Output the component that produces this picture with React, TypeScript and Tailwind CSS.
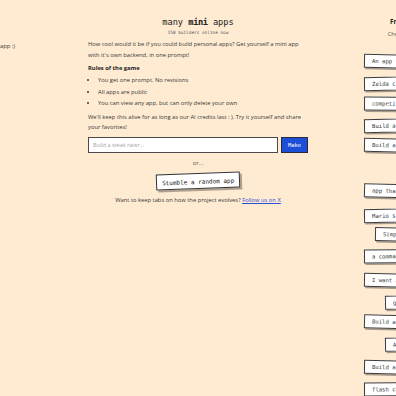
import React from 'react';

const mono = "font-['DejaVu_Sans_Mono',monospace]";
const sans = "font-['Open_Sans',sans-serif]";

// prompts shown in the right-hand feed; gap is the space above each card
const feed = [
  { text: 'An app that tracks my daily habits and keeps streaks going', gap: 'mt-0', tilt: 'rotate-[1deg]' },
  { text: 'Zelda clone with a tiny overworld and a dungeon to explore', gap: 'mt-[7px]', tilt: '-rotate-[1deg]' },
  { text: 'competitive typing race where friends can join by link', gap: 'mt-[7px]', tilt: 'rotate-[0.5deg]' },
  { text: 'Build a recipe box where my family can add their favorites', gap: 'mt-[7px]', tilt: '-rotate-[1deg]' },
  { text: 'Build a pixel art editor with layers and an export button', gap: 'mt-[7px]', tilt: 'rotate-[1deg]' },
  { text: 'Todo list', gap: 'mt-[9px]', tilt: '-rotate-[1.5deg]' },
  { text: 'app that rates my outfits from a short description of them', gap: 'mt-[9px]', tilt: 'rotate-[1.5deg]' },
  { text: 'Mario style platformer with three levels and a boss fight', gap: 'mt-[9px]', tilt: '-rotate-[1deg]' },
  { text: 'Simple chess game with a bot', gap: 'mt-[6px]', tilt: 'rotate-[1deg]' },
  { text: 'a command line interface for taking quick notes each day', gap: 'mt-[7px]', tilt: '-rotate-[0.5deg]' },
  { text: 'I want a shared board for my team to vote on lunch spots', gap: 'mt-[11px]', tilt: 'rotate-[1deg]' },
  { text: 'guess the flag, daily!', gap: 'mt-[7px]', tilt: '-rotate-[1deg]' },
  { text: 'Build a weather dashboard for all the cities I care about', gap: 'mt-[7px]', tilt: 'rotate-[1.5deg]' },
  { text: 'A tiny quiz on planets', gap: 'mt-[7px]', tilt: '-rotate-[1deg]' },
  { text: 'Build a mood journal app with a calendar heatmap view', gap: 'mt-[10px]', tilt: 'rotate-[1deg]' },
  { text: 'flash cards for learning spanish verbs with spaced repetition', gap: 'mt-[7px]', tilt: '-rotate-[0.5deg]' },
];

function Card({ text, className }: { text: string; className?: string }) {
  return (
    <div
      className={`max-w-full bg-white border-[1.5px] border-[#3b3b3b] shadow-[1.5px_1.5px_0_rgba(60,50,40,0.45)] px-[7px] h-[14px] flex items-center text-[5.6px] text-[#333] whitespace-nowrap overflow-hidden ${mono} ${className ?? ''}`}
    >
      <span className="truncate">{text}</span>
    </div>
  );
}

export default function App() {
  return (
    <div className={`w-[396px] h-[396px] overflow-hidden bg-[#feebd2] text-[#383838] flex ${sans}`}>
      {/* left column, only its tail is on screen */}
      <div className="w-[88px] shrink-0 pt-[41px]">
        <p className="text-[5.8px] leading-[10.5px] whitespace-nowrap">app :)</p>
      </div>

      {/* main column */}
      <div className="w-[220px] shrink-0 flex flex-col pt-[16px]">
        <h1 className={`text-center text-[8.7px] leading-[12px] text-[#222] ${mono}`}>
          many <span className="font-bold tracking-[-0.4px]">mini</span> apps
        </h1>
        <p className={`mt-[2px] text-center text-[4.4px] leading-[6px] text-[#555] ${mono}`}>
          158 builders online now
        </p>

        <p className="mt-[3px] text-[5.8px] leading-[10.5px]">
          How cool would it be if you could build personal apps? Get yourself a mini app with it's own
          backend, in one prompt!
        </p>

        <p className="mt-[3px] text-[5.8px] leading-[10.5px] font-bold text-[#222]">Rules of the game</p>
        <ul className="mt-[1.5px] list-disc pl-[10px] text-[5.8px] leading-[10.5px] flex flex-col gap-[1px]">
          <li>You get one prompt. No revisions</li>
          <li>All apps are public</li>
          <li>You can view any app, but can only delete your own</li>
        </ul>

        <p className="mt-[3px] text-[5.8px] leading-[10.5px]">
          We'll keep this alive for as long as our AI credits last : ). Try it yourself and share your
          favorites!
        </p>

        <div className="mt-[4.5px] flex gap-[3px] h-[16px]">
          <input
            placeholder="Build a steak rater..."
            className="flex-1 min-w-0 bg-white border-[1.5px] border-[#4a4a4a] px-[4px] text-[5.5px] placeholder:text-[#a3a3a3] outline-none"
          />
          <button
            className={`w-[27px] bg-[#1d4ed8] border border-[#2a2a3a] text-white text-[5.5px] ${mono}`}
          >
            Make
          </button>
        </div>

        <p className="mt-[4.75px] text-center text-[5.8px] leading-[10.5px] text-[#555]">or...</p>

        <div className="mt-[4.75px] flex justify-center">
          <button
            className={`-rotate-[2deg] bg-white border-[1.5px] border-[#333] shadow-[2px_2px_0_rgba(60,50,40,0.4)] h-[16px] px-[5px] text-[6px] text-[#222] ${mono}`}
          >
            Stumble a random app
          </button>
        </div>

        <p className="mt-[5.75px] text-center text-[5.8px] leading-[10.5px]">
          Want to keep tabs on how the project evolves?{' '}
          <a href="#" className="text-[#2b4fd6] underline">
            Follow us on X
          </a>
        </p>
      </div>

      {/* right feed */}
      <div className="ml-[56px] w-[132px] shrink-0 flex flex-col items-center pt-[18px]">
        <h2 className="text-[6.3px] leading-[8px] font-bold text-[#222] whitespace-nowrap">
          Fresh apps from builders!
        </h2>
        <p className="mt-[4px] text-[5.8px] leading-[8px] text-[#555] whitespace-nowrap">
          Check out what the others built
        </p>
        <div className="mt-[17px] w-full flex flex-col items-center">
          {feed.map((f, i) => (
            <Card key={i} text={f.text} className={`${f.gap} ${f.tilt}`} />
          ))}
        </div>
      </div>
    </div>
  );
}
